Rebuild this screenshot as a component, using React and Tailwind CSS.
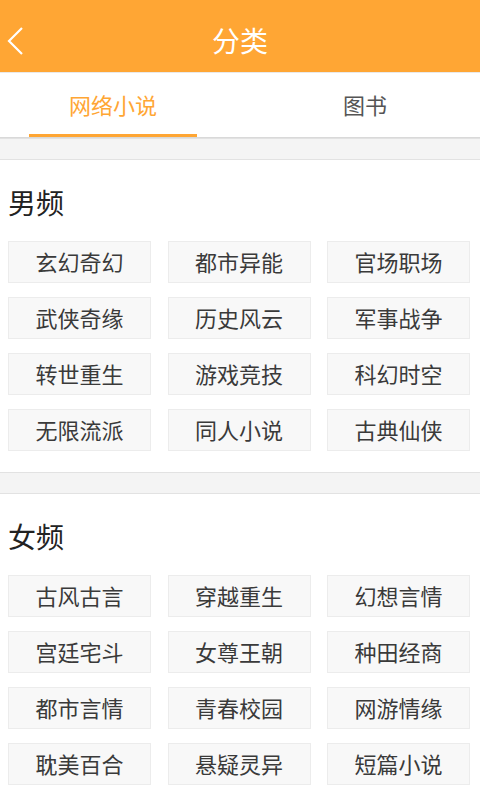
import React, { useState } from "react";

const male = [
  "玄幻奇幻", "都市异能", "官场职场",
  "武侠奇缘", "历史风云", "军事战争",
  "转世重生", "游戏竞技", "科幻时空",
  "无限流派", "同人小说", "古典仙侠",
];

const female = [
  "古风古言", "穿越重生", "幻想言情",
  "宫廷宅斗", "女尊王朝", "种田经商",
  "都市言情", "青春校园", "网游情缘",
  "耽美百合", "悬疑灵异", "短篇小说",
];

function Section({ title, tags }) {
  return (
    <div className="pt-[22px] pb-[21px]">
      <h2 className="h-[40px] leading-[40px] pl-2 text-[28px] text-[#222]">{title}</h2>
      <div className="mt-[19px] grid grid-cols-3 gap-x-[16.5px] gap-y-[14px] pl-2 pr-[10px]">
        {tags.map((t) => (
          <button
            key={t}
            className="h-[42px] border border-[#ececec] bg-[#f8f8f8] text-[22px] leading-[30px] pb-[3px] text-[#3a3a3a]"
          >
            {t}
          </button>
        ))}
      </div>
    </div>
  );
}

function Divider() {
  return <div className="h-[22px] border-y border-[#e2e2e2] bg-[#f4f4f4]" />;
}

export default function App() {
  const [tab, setTab] = useState(0);

  return (
    <div
      className="w-[480px] h-[800px] overflow-hidden bg-white"
      style={{ fontFamily: '"Noto Sans CJK SC", "Noto Sans", sans-serif' }}
    >
      {/* header */}
      <div className="relative h-[73px] bg-[#ffa634] border-b border-[#e9e9e9] flex items-center justify-center">
        <svg
          className="absolute left-[6px] top-[26px]"
          width="20"
          height="30"
          viewBox="0 0 20 30"
          fill="none"
          stroke="white"
          strokeWidth="2.2"
        >
          <path d="M16 2 L3 15 L16 28" />
        </svg>
        <span className="text-white text-[28px] leading-none mt-[8px]">分类</span>
      </div>

      {/* tabs */}
      <div className="flex h-[65px] border-b border-[#d9d9d9]">
        {["网络小说", "图书"].map((t, i) => (
          <div
            key={t}
            onClick={() => setTab(i)}
            className={
              i === 0
                ? "w-[226px] flex flex-col items-center cursor-pointer"
                : "flex-1 flex flex-col items-center pl-[24px] cursor-pointer"
            }
          >
            <span
              className={
                tab === i
                  ? "flex-1 flex items-center text-[22px] text-[#ffa634] pt-[2px]"
                  : "flex-1 flex items-center text-[22px] text-[#555] pt-[2px]"
              }
            >
              {t}
            </span>
            <div
              className={
                tab === i ? "h-[3px] w-[168px] bg-[#ffa634]" : "h-[3px] w-[168px]"
              }
            />
          </div>
        ))}
      </div>

      <Divider />
      <Section title="男频" tags={male} />
      <Divider />
      <Section title="女频" tags={female} />
    </div>
  );
}
